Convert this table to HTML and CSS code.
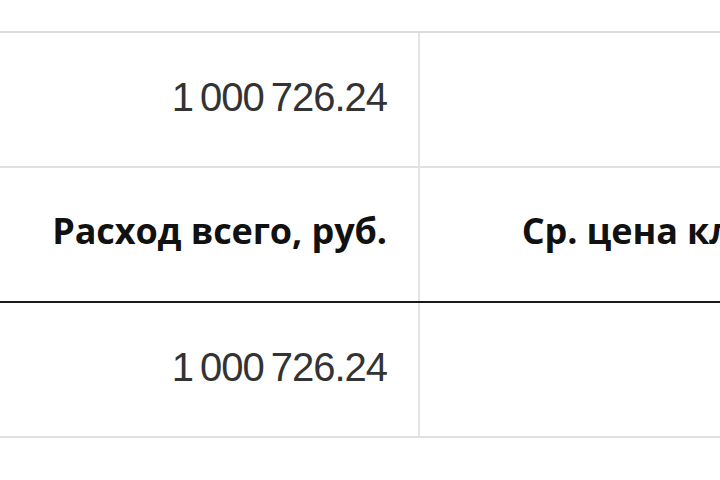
FILE: index.html
```html
<!DOCTYPE html>
<html lang="ru">
<head>
<meta charset="utf-8">
<title>Статистика</title>
<link rel="stylesheet" href="styles.css">
</head>
<body>
<div class="viewport">
  <div class="table">
    <div class="row">
      <div class="cell num">1&#8201;000&#8201;726.24</div>
      <div class="cell"></div>
    </div>
    <div class="row head">
      <div class="cell th">Расход всего, руб.</div>
      <div class="cell th">Ср. цена клика, руб.</div>
    </div>
    <div class="row">
      <div class="cell num">1&#8201;000&#8201;726.24</div>
      <div class="cell"></div>
    </div>
  </div>
</div>
</body>
</html>
```

FILE: styles.css
```css
html, body {
  margin: 0;
  padding: 0;
  background: #fff;
}
.viewport {
  width: 720px;
  height: 480px;
  overflow: hidden;
}
.table {
  margin-top: 31px;
  width: 930px;
  border-top: 2px solid #dcdcdc;
}
.row {
  display: grid;
  grid-template-columns: 420px 1fr;
  height: 135px;
  box-sizing: border-box;
  border-bottom: 2px solid #e0e0e0;
}
.row.head {
  border-bottom-color: #1a1a1a;
}
.cell {
  box-sizing: border-box;
  border-right: 2px solid #e4e4e4;
  display: flex;
  align-items: center;
  justify-content: flex-end;
  padding-right: 31px;
  white-space: nowrap;
}
.num {
  font-family: "Liberation Sans", Arial, sans-serif;
  font-size: 40px;
  letter-spacing: -1px;
  color: #333;
  padding-bottom: 4px;
}
.th {
  font-family: "Open Sans", "Noto Sans", sans-serif;
  font-weight: 700;
  font-size: 36px;
  letter-spacing: -0.1px;
  color: #111;
  padding-bottom: 8px;
}
```
